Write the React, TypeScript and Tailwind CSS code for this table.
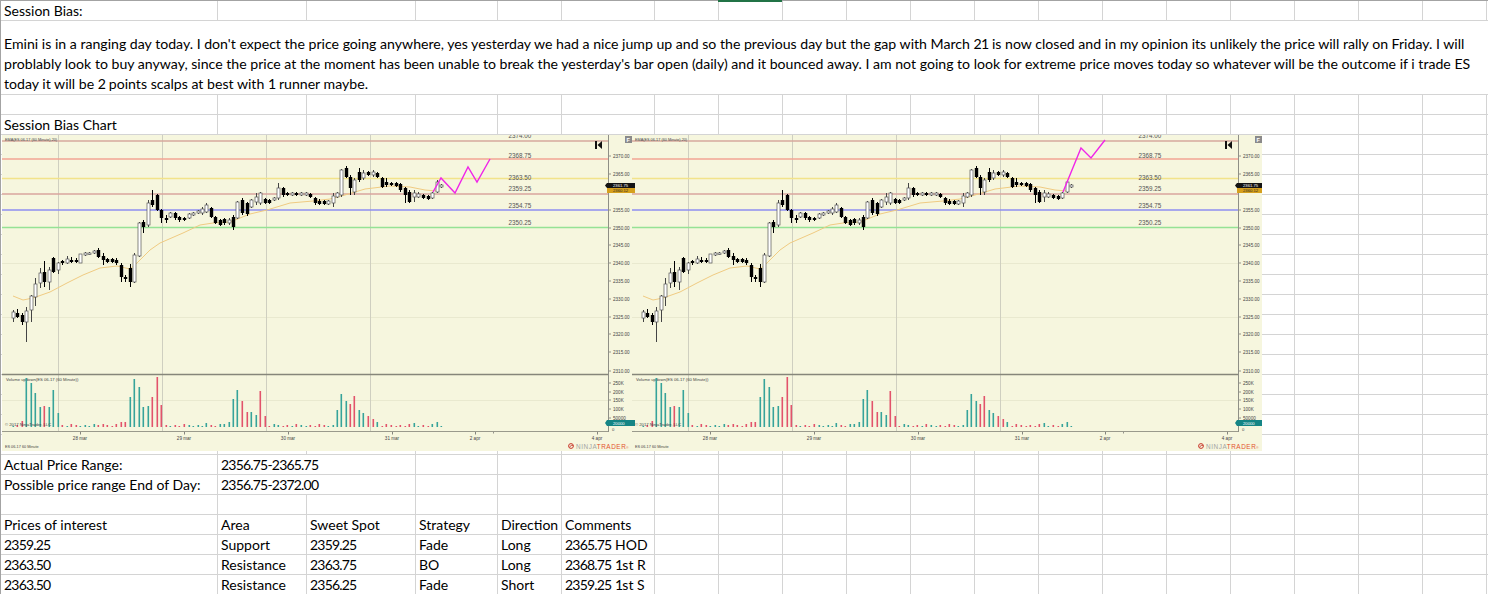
import React from "react";

type Candle = [number, number, number, number, number, 0 | 1];

const CANDLES: Candle[] = [
  [13, 312, 318, 310, 322, 1], [17, 313, 317, 309, 318, 0], [22, 315, 322, 313, 325, 0],
  [26, 311, 322, 307, 342, 1], [31, 296, 310, 295, 322, 1], [35, 284, 297, 278, 306, 1],
  [40, 273, 283, 268, 288, 1], [44, 272, 282, 261, 287, 0], [49, 270, 282, 267, 290, 1],
  [53, 258, 272, 257, 273, 0], [58, 263, 270, 262, 274, 1], [62, 261, 263, 260, 265, 0],
  [67, 259, 263, 256, 264, 1], [71, 260, 262, 257, 263, 0], [76, 260, 262, 258, 263, 0],
  [80, 254, 263, 254, 263, 1], [85, 253, 255, 252, 256, 1], [89, 253, 254, 252, 255, 1],
  [94, 251, 253, 250, 254, 1], [98, 250, 257, 248, 258, 0], [103, 256, 260, 253, 265, 0],
  [107, 259, 262, 258, 263, 0], [112, 259, 262, 258, 263, 0], [116, 260, 263, 258, 265, 0],
  [121, 265, 277, 263, 282, 0], [125, 277, 279, 275, 282, 0], [130, 268, 282, 264, 287, 0],
  [134, 255, 282, 253, 283, 1], [139, 223, 256, 222, 257, 1], [143, 222, 227, 220, 233, 0],
  [148, 203, 225, 200, 227, 1], [152, 200, 205, 190, 207, 0], [157, 195, 210, 194, 211, 0],
  [161, 210, 218, 209, 223, 0], [166, 218, 220, 215, 223, 0], [170, 213, 217, 212, 218, 1],
  [175, 213, 218, 212, 220, 0], [179, 217, 220, 216, 222, 0], [184, 218, 220, 217, 221, 0],
  [189, 214, 218, 213, 219, 1], [193, 213, 215, 212, 216, 1], [198, 211, 213, 210, 214, 1],
  [202, 209, 213, 207, 215, 1], [206, 205, 212, 203, 213, 1], [211, 208, 217, 207, 218, 0],
  [215, 217, 223, 216, 224, 0], [220, 220, 225, 219, 226, 0], [224, 219, 223, 218, 225, 0],
  [229, 220, 223, 218, 225, 1], [233, 217, 227, 215, 230, 0], [237, 202, 218, 201, 219, 1],
  [242, 200, 213, 198, 215, 0], [247, 203, 214, 202, 216, 0], [251, 200, 207, 199, 208, 1],
  [256, 197, 202, 193, 205, 1], [260, 193, 203, 192, 205, 1], [265, 199, 203, 198, 204, 0],
  [269, 200, 203, 199, 204, 0], [274, 198, 200, 197, 201, 1], [278, 188, 198, 183, 200, 1],
  [283, 188, 195, 187, 197, 0], [287, 193, 195, 192, 196, 0], [292, 193, 195, 192, 196, 1],
  [296, 193, 195, 192, 196, 0], [301, 193, 195, 192, 196, 1], [306, 193, 195, 192, 196, 1],
  [310, 194, 197, 193, 198, 0], [315, 198, 203, 197, 205, 0], [319, 201, 204, 199, 205, 0],
  [324, 201, 204, 200, 205, 0], [328, 201, 204, 200, 205, 1], [333, 196, 203, 193, 207, 1],
  [337, 193, 197, 192, 198, 1], [341, 170, 195, 169, 197, 1], [346, 168, 177, 166, 178, 0],
  [350, 177, 188, 175, 195, 0], [354, 180, 192, 178, 195, 1], [359, 172, 180, 168, 182, 0],
  [363, 173, 178, 170, 180, 1], [368, 172, 175, 171, 176, 0], [373, 172, 175, 170, 177, 1],
  [377, 173, 177, 172, 178, 0], [382, 178, 187, 177, 188, 0], [386, 182, 185, 178, 187, 0],
  [391, 183, 185, 182, 186, 0], [396, 183, 186, 182, 187, 0], [400, 184, 190, 183, 192, 0],
  [405, 188, 195, 187, 203, 0], [409, 192, 202, 190, 203, 0], [414, 193, 197, 190, 202, 1],
  [418, 194, 197, 192, 198, 1], [423, 195, 198, 194, 199, 0], [428, 196, 199, 195, 200, 0],
  [432, 193, 198, 192, 199, 1], [437, 182, 192, 180, 193, 1], [441, 185, 187, 184, 188, 1],
];

const VOL: Record<number, [number, "t" | "r"]> = {
  22: [421, "r"], 26: [378, "t"], 31: [383, "t"], 35: [393, "t"], 40: [407, "t"], 44: [406, "r"],
  49: [407, "t"], 53: [390, "t"], 58: [413, "t"], 103: [424, "r"], 121: [422, "r"], 125: [422, "r"],
  130: [397, "t"], 134: [379, "t"], 139: [387, "t"], 143: [407, "t"], 148: [406, "t"], 152: [397, "r"],
  157: [377, "r"], 161: [405, "r"], 206: [423, "t"], 220: [424, "t"], 224: [424, "t"], 229: [422, "t"],
  233: [399, "t"], 237: [390, "t"], 242: [401, "r"], 247: [412, "r"], 251: [412, "t"], 256: [415, "t"],
  260: [391, "r"], 265: [416, "r"], 337: [410, "t"], 341: [394, "t"], 346: [401, "t"], 350: [404, "r"],
  354: [396, "r"], 359: [410, "t"], 363: [413, "t"], 368: [416, "r"], 373: [419, "r"], 377: [422, "t"],
  414: [423, "t"], 437: [422, "t"],
};

const EMA =
  "13,296 23,300 33,298 50,292 67,283 83,275 100,268 117,266 130,269 137,263 150,250 160,243 183,233 200,225 213,223 230,222 250,214 267,210 290,203 313,201 330,199 345,195 365,189 390,186 410,187 425,190 437,191";

const LEVELS: [number, string, string, number][] = [
  [141, "#d6a89c", "2374.00", 137.5],
  [159, "#f2a493", "2368.75", 158],
  [178.5, "#f2e38a", "2363.50", 179.5],
  [194, "#d8a59e", "2359.25", 191],
  [210, "#8e8ef0", "2354.75", 208],
  [227.5, "#95e295", "2350.25", 225],
];

const PRICE_TICKS: [string, number][] = [
  ["2370.00", 156], ["2365.00", 174], ["2355.00", 210], ["2350.00", 228], ["2345.00", 245],
  ["2340.00", 263], ["2335.00", 281], ["2330.00", 299], ["2325.00", 317], ["2320.00", 334],
  ["2315.00", 352], ["2310.00", 371],
];

const VOL_TICKS: [string, number][] = [
  ["250K", 383], ["200K", 392], ["150K", 400], ["100K", 409], ["50000", 418],
];

const X_LABELS: [string, number][] = [
  ["28 mar", 80], ["29 mar", 184], ["30 mar", 288], ["31 mar", 392], ["2 apr", 475], ["4 apr", 597],
];

const FONT = "Liberation Sans, Arial, sans-serif";

function ChartSvg({ magenta, width }: { magenta: string; width: number }) {
  const teal = "#36a39a";
  const red = "#e2536b";
  return (
    <svg width={width} height={316} viewBox={`2 135 ${width} 316`} className="block overflow-hidden" fontFamily={FONT}>
      <rect x={2} y={135} width={630} height={316} fill="#f6f6de" />
      {[263, 317].map((y) => (
        <line key={y} x1={2} x2={608} y1={y + 0.5} y2={y + 0.5} stroke="#e9e9cf" strokeWidth={1} />
      ))}
      <line x1={2} x2={608} y1={400.5} y2={400.5} stroke="#e9e9cf" strokeWidth={1} />
      {[58, 162, 266, 370].map((x) => (
        <line key={x} x1={x + 0.5} x2={x + 0.5} y1={135} y2={431} stroke="#cfcfc0" strokeWidth={1} />
      ))}
      {LEVELS.map(([y, c, label, by]) => (
        <g key={label}>
          <line x1={2} x2={608} y1={y} y2={y} stroke={c} strokeWidth={1.3} />
          <text x={520} y={by} fontSize={6.3} fill="#555" textAnchor="middle">
            {label}
          </text>
        </g>
      ))}
      <polyline points={EMA} fill="none" stroke="#f0cb82" strokeWidth={1} />
      {CANDLES.map(([x, bt, bb, wt, wb, w], i) => (
        <g key={i}>
          <line x1={x + 0.5} x2={x + 0.5} y1={wt} y2={wb} stroke={w ? "#444" : "#000"} strokeWidth={1} />
          {w ? (
            <rect x={x - 1} y={bt} width={3} height={Math.max(bb - bt, 1.5)} fill="#fff" stroke="#555" strokeWidth={0.7} />
          ) : (
            <rect x={x - 1.2} y={bt} width={3.4} height={Math.max(bb - bt, 1.5)} fill="#000" />
          )}
        </g>
      ))}
      <polyline points={magenta} fill="none" stroke="#f025e8" strokeWidth={1.4} strokeLinejoin="miter" />
      <text x={5} y={141} fontSize={3.8} fill="#444">
        EMA(ES 06-17 (60 Minute),20)
      </text>
      <rect x={595} y={141} width={2} height={8} fill="#111" />
      <polygon points="602,141 597.5,145 602,149" fill="#111" />
      <rect x={625} y={136} width={7} height={7} fill="#8a8a8a" />
      <text x={626.6} y={141.9} fontSize={5.5} fill="#fff" fontWeight="bold">
        F
      </text>
      <line x1={608.5} x2={608.5} y1={135} y2={432} stroke="#8f8f86" strokeWidth={1} />
      {PRICE_TICKS.map(([t, y]) => (
        <g key={t}>
          <line x1={609} x2={611} y1={y} y2={y} stroke="#555" strokeWidth={0.6} />
          <text x={613} y={y + 1.6} fontSize={4.6} fill="#444">
            {t}
          </text>
        </g>
      ))}
      <polygon points="605,185.5 607,183 607,188" fill="#111" />
      <rect x={607} y={183} width={28} height={5} fill="#141414" />
      <text x={613} y={187} fontSize={4.2} fill="#fff">
        2361.75
      </text>
      <rect x={607} y={188} width={28} height={5} fill="#d6a01e" />
      <text x={613} y={192} fontSize={4.2} fill="#2a2a2a">
        2360.12
      </text>
      <line x1={2} x2={608} y1={374.5} y2={374.5} stroke="#86867a" strokeWidth={1.4} />
      <text x={6} y={381} fontSize={4.2} fill="#444">
        Volume updown(ES 06-17 (60 Minute))
      </text>
      {CANDLES.map(([x, , , , , w], i) => {
        const v = VOL[x];
        const top = v ? v[0] : 427 - [1, 2, 1, 3, 2][i % 5];
        const col = v ? (v[1] === "t" ? teal : red) : w ? teal : red;
        return <rect key={i} x={x - 0.5} y={top} width={1.6} height={427 - top} fill={col} />;
      })}
      {VOL_TICKS.map(([t, y]) => (
        <g key={t}>
          <line x1={609} x2={611} y1={y} y2={y} stroke="#555" strokeWidth={0.6} />
          <text x={613} y={y + 1.6} fontSize={4.6} fill="#444">
            {t}
          </text>
        </g>
      ))}
      <polygon points="605,423 607,420 607,426" fill="#138585" />
      <rect x={607} y={420} width={28} height={6} fill="#158585" />
      <text x={613} y={424.8} fontSize={4.2} fill="#fff">
        20000
      </text>
      <text x={612} y={430.5} fontSize={4.2} fill="#444">
        0
      </text>
      <text x={5} y={426} fontSize={4.2} fill="#444">
        © 2017 NinjaTrader, LLC
      </text>
      <line x1={2} x2={608} y1={431.5} y2={431.5} stroke="#9a9a8c" strokeWidth={1} />
      {X_LABELS.map(([t, x]) => (
        <g key={t}>
          <line x1={x + 0.5} x2={x + 0.5} y1={432} y2={434.5} stroke="#555" strokeWidth={0.7} />
          <text x={x} y={440} fontSize={4.6} fill="#444" textAnchor="middle">
            {t}
          </text>
        </g>
      ))}
      <line x1={493.5} x2={493.5} y1={432} y2={433.5} stroke="#555" strokeWidth={0.6} />
      <text x={5} y={448} fontSize={3.8} fill="#444">
        ES 06-17 60 Minute
      </text>
      <circle cx={571} cy={446} r={2.4} fill="none" stroke="#c8372b" strokeWidth={1} />
      <path d="M569.5 447.5 Q571 444 573 445.5" fill="none" stroke="#c8372b" strokeWidth={0.8} />
      <text x={576} y={449} fontSize={6.4} letterSpacing={0.55}>
        <tspan fill="#a3a3a3">NINJA</tspan>
        <tspan fill="#e2532d">TRADER</tspan>
        <tspan fill="#e2532d" fontSize={3}>
          ®
        </tspan>
      </text>
    </svg>
  );
}

function T({ s }: { s: string }) {
  const parts = s.split(/(\d[\d.,\-]*)/);
  return (
    <>
      {parts.map((p, i) =>
        /^\d/.test(p) ? (
          <span key={i} className="tracking-[-0.8px]">
            {p}
          </span>
        ) : (
          <React.Fragment key={i}>{p}</React.Fragment>
        )
      )}
    </>
  );
}

type CellDef = string | [string, number];

const GRID = "grid grid-cols-[217px_89px_109px_82px_64px_93px_repeat(13,64px)_1fr]";

function Row({ cells = [], first = false }: { cells?: CellDef[]; first?: boolean }) {
  const list: [string, number][] = cells.map((c) => (typeof c === "string" ? [c, 1] : c));
  let used = list.reduce((a, [, s]) => a + s, 0);
  while (used < 20) {
    list.push(["", 1]);
    used++;
  }
  return (
    <div className={`${GRID} ${first ? "h-[21px] border-t border-[#a3a3a3]" : "h-[20px]"}`}>
      {list.map(([t, s], i) => (
        <div
          key={i}
          className={`${s === 2 ? "col-span-2" : ""} border-r border-b border-[#d4d4d4] pl-[3px] leading-[19px] whitespace-nowrap overflow-hidden`}
        >
          <T s={t} />
        </div>
      ))}
    </div>
  );
}

export default function App() {
  const chartRows = Array.from({ length: 16 }, (_, i) => i);
  return (
    <div className="relative w-[1488px] h-[594px] overflow-hidden bg-white border-l border-[#a3a3a3] font-[family-name:Lato,'Noto_Sans',sans-serif] text-[14px] text-black">
      <div className="absolute left-[717px] top-0 w-[64px] h-[2px] bg-[#217346]" />
      <Row first cells={["Session Bias:"]} />
      <div className="h-[74px] border-b border-[#d4d4d4] pl-[3px] pt-[13px] leading-[20px] whitespace-nowrap text-[14.12px]">
        <div>
          <T s="Emini is in a ranging day today. I don't expect the price going anywhere, yes yesterday we had a nice jump up and so the previous day but the gap with March 21 is now closed and in my opinion its unlikely the price will rally on Friday. I will" />
        </div>
        <div>
          <T s="problably look to buy anyway, since the price at the moment has been unable to break the yesterday's bar open (daily) and it bounced away. I am not going to look for extreme price moves today so whatever will be the outcome if i trade ES" />
        </div>
        <div>
          <T s="today it will be 2 points scalps at best with 1 runner maybe." />
        </div>
      </div>
      <Row />
      <Row cells={["Session Bias Chart"]} />
      <div className="relative">
        {chartRows.map((i) => (
          <Row key={i} />
        ))}
        <div className="absolute left-[631px] top-0">
          <ChartSvg width={630} magenta="433,192 451,148 461,158 475,140" />
        </div>
        <div className="absolute left-[1px] top-0">
          <ChartSvg width={633} magenta="433,192 441,178 455,193 468,167 477,182 490,159" />
        </div>
      </div>
      <Row cells={["Actual Price Range:", ["2356.75-2365.75", 2]]} />
      <Row cells={["Possible price range End of Day:", ["2356.75-2372.00", 2]]} />
      <Row />
      <Row cells={["Prices of interest", "Area", "Sweet Spot", "Strategy", "Direction", "Comments"]} />
      <Row cells={["2359.25", "Support", "2359.25", "Fade", "Long", "2365.75 HOD"]} />
      <Row cells={["2363.50", "Resistance", "2363.75", "BO", "Long", "2368.75 1st R"]} />
      <Row cells={["2363.50", "Resistance", "2356.25", "Fade", "Short", "2359.25 1st S"]} />
    </div>
  );
}
